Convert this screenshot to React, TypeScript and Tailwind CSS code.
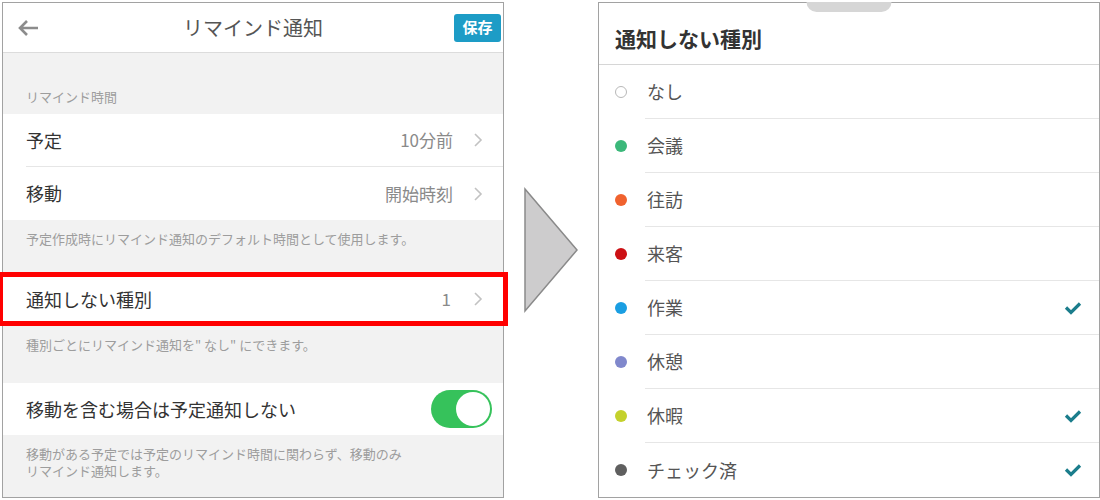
import React from "react";

const font = { fontFamily: '"Noto Sans CJK JP", "Noto Sans", sans-serif' };

type Kind = { name: string; dot: string; hollow?: boolean; checked?: boolean };

const kinds: Kind[] = [
  { name: "なし", dot: "", hollow: true },
  { name: "会議", dot: "bg-[#3bb87a]" },
  { name: "往訪", dot: "bg-[#f0622e]" },
  { name: "来客", dot: "bg-[#cc1014]" },
  { name: "作業", dot: "bg-[#1a9ee2]", checked: true },
  { name: "休憩", dot: "bg-[#8088cc]" },
  { name: "休暇", dot: "bg-[#c4d12c]", checked: true },
  { name: "チェック済", dot: "bg-[#5f5f5f]", checked: true },
];

const Chevron = () => (
  <svg width="10" height="16" viewBox="0 0 10 16" className="shrink-0">
    <polyline points="2,2 8,8 2,14" fill="none" stroke="#c2c2c2" strokeWidth="1.6" />
  </svg>
);

const Check = () => (
  <svg width="18" height="14" viewBox="0 0 18 14">
    <polyline points="2,6.5 7,11.5 16,2.5" fill="none" stroke="#1b7d8c" strokeWidth="3.2" />
  </svg>
);

const SettingRow = ({ label, value, last }: { label: string; value: string; last?: boolean }) => (
  <div className="flex h-[53px] bg-white pl-[23px]">
    <div className={`flex flex-1 items-center pr-[20px] ${last ? "" : "border-b border-[#e6e6e6]"}`}>
      <span className="flex-1 text-[18px] text-[#333]">{label}</span>
      <span className="mr-[20px] text-[17px] text-[#8a8a8a]">{value}</span>
      <Chevron />
    </div>
  </div>
);

const Note = ({ children, className }: { children: React.ReactNode; className: string }) => (
  <div className={`shrink-0 px-[23px] text-[13px] leading-[17px] text-[#9d9d9d] ${className}`}>{children}</div>
);

const ReminderSettings = () => (
  <div className="flex h-[496px] w-[502px] shrink-0 flex-col border border-[#a2a2a2] bg-[#f2f2f2]">
    <div className="grid h-[50px] shrink-0 grid-cols-[1fr_auto_1fr] items-center border-b border-[#dcdcdc] bg-white">
      <svg width="24" height="20" viewBox="0 0 24 20" className="ml-[13px]">
        <path d="M22 10H4M11 3L4 10L11 17" fill="none" stroke="#8c8c8c" strokeWidth="2.6" />
      </svg>
      <span className="text-[20px] text-[#555]">リマインド通知</span>
      <div className="flex justify-end pr-[2px]">
        <button className="h-[28px] w-[47px] rounded-[3px] bg-[#1d9cc6] text-[15px] font-bold text-white">保存</button>
      </div>
    </div>

    <div className="flex h-[61px] shrink-0 items-end px-[23px] pb-[8px] text-[13px] text-[#9d9d9d]">リマインド時間</div>
    <SettingRow label="予定" value="10分前" />
    <SettingRow label="移動" value="開始時刻" last />
    <Note className="h-[57px] pt-[10px]">予定作成時にリマインド通知のデフォルト時間として使用します。</Note>

    <div className="flex h-[44px] shrink-0 items-center bg-white pl-[23px] pr-[20px] outline-[5px] outline-solid outline-[#ff0000]">
      <span className="flex-1 text-[18px] text-[#333]">通知しない種別</span>
      <span className="mr-[22px] text-[17px] text-[#8a8a8a]">1</span>
      <Chevron />
    </div>
    <Note className="h-[62px] pt-[15px]">種別ごとにリマインド通知を" なし" にできます。</Note>

    <div className="flex h-[52px] shrink-0 items-center bg-white pl-[23px] pr-[11px]">
      <span className="flex-1 text-[18px] text-[#333]">移動を含む場合は予定通知しない</span>
      <div className="flex h-[38px] w-[61px] items-center justify-end rounded-full bg-[#36c25b] p-[2px]">
        <div className="h-[34px] w-[34px] rounded-full bg-white" />
      </div>
    </div>
    <Note className="pt-[10px]">
      移動がある予定では予定のリマインド時間に関わらず、移動のみ
      <br />
      リマインド通知します。
    </Note>
  </div>
);

const KindSheet = () => (
  <div className="relative flex h-[496px] w-[502px] shrink-0 flex-col border border-[#a2a2a2] bg-white">
    <div className="absolute left-1/2 top-[-1px] h-[10px] w-[85px] -translate-x-1/2 rounded-b-full bg-[#d6d6d6]" />
    <div className="h-[62px] shrink-0 border-b border-[#d6d6d6] pl-[16px] pt-[22px] text-[21px] font-bold leading-[26px] text-[#333]">
      通知しない種別
    </div>
    {kinds.map((k, i) => (
      <div key={k.name} className="flex h-[54px] shrink-0">
        <div className="flex w-[46px] items-center pl-[16px]">
          <div
            className={`h-[12px] w-[12px] rounded-full ${k.hollow ? "border border-[#b8b8b8] bg-white" : k.dot}`}
          />
        </div>
        <div
          className={`flex flex-1 items-center pl-[2px] pr-[17px] ${i < kinds.length - 1 ? "border-b border-[#e6e6e6]" : ""}`}
        >
          <span className="flex-1 text-[18px] text-[#555]">{k.name}</span>
          {k.checked && <Check />}
        </div>
      </div>
    ))}
  </div>
);

export default function App() {
  return (
    <div className="flex h-[500px] w-[1100px] items-start bg-white pl-[2px] pt-[2px]" style={font}>
      <ReminderSettings />
      <div className="w-[94px] shrink-0">
        <svg width="94" height="496" viewBox="0 0 94 496">
          <polygon points="21,187 73,248 21,309" fill="#cdcccd" stroke="#8a8a8a" strokeWidth="1.5" />
        </svg>
      </div>
      <KindSheet />
    </div>
  );
}
